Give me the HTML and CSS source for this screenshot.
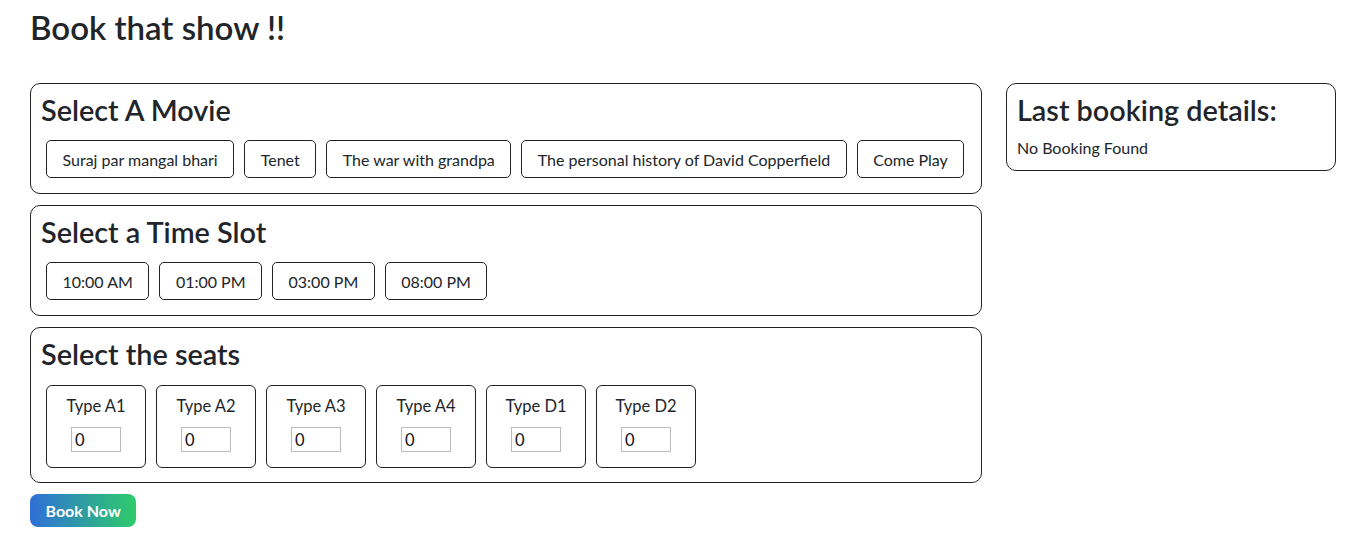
FILE: index.html
```html
<!DOCTYPE html>
<html lang="en">
<head>
<meta charset="utf-8">
<title>Book that show !!</title>
<link rel="stylesheet" href="styles.css">
</head>
<body>
<div class="page">
  <h2 class="title">Book that show !!</h2>
  <div class="layout">
    <div class="left">
      <section class="card">
        <h3 class="card-title">Select A Movie</h3>
        <div class="options">
          <button class="opt">Suraj par mangal bhari</button>
          <button class="opt">Tenet</button>
          <button class="opt">The war with grandpa</button>
          <button class="opt">The personal history of David Copperfield</button>
          <button class="opt">Come Play</button>
        </div>
      </section>
      <section class="card">
        <h3 class="card-title">Select a Time Slot</h3>
        <div class="options">
          <button class="opt">10:00 AM</button>
          <button class="opt">01:00 PM</button>
          <button class="opt">03:00 PM</button>
          <button class="opt">08:00 PM</button>
        </div>
      </section>
      <section class="card">
        <h3 class="card-title">Select the seats</h3>
        <div class="options">
          <div class="seat"><span class="seat-label">Type A1</span><input class="seat-input" type="number" value="0"></div>
          <div class="seat"><span class="seat-label">Type A2</span><input class="seat-input" type="number" value="0"></div>
          <div class="seat"><span class="seat-label">Type A3</span><input class="seat-input" type="number" value="0"></div>
          <div class="seat"><span class="seat-label">Type A4</span><input class="seat-input" type="number" value="0"></div>
          <div class="seat"><span class="seat-label">Type D1</span><input class="seat-input" type="number" value="0"></div>
          <div class="seat"><span class="seat-label">Type D2</span><input class="seat-input" type="number" value="0"></div>
        </div>
      </section>
      <div><button class="book">Book Now</button></div>
    </div>
    <aside class="right">
      <section class="card">
        <h3 class="card-title">Last booking details:</h3>
        <p class="note">No Booking Found</p>
      </section>
    </aside>
  </div>
</div>
</body>
</html>
```
FILE: styles.css
```css
* { box-sizing: border-box; }
body {
  margin: 0;
  font-family: "Lato", "Noto Sans", sans-serif;
  color: #212529;
  font-size: 16.5px;
  line-height: 1.5;
  background: #fff;
}
.page {
  padding: 8px 30px 0;
}
.title {
  margin: 0 0 37px;
  font-size: 33px;
  font-weight: 600;
  line-height: 38px;
}
.layout {
  display: grid;
  grid-template-columns: 1fr 330px;
  gap: 24px;
  align-items: start;
}
.left {
  display: flex;
  flex-direction: column;
  gap: 11px;
}
.card {
  border: 1px solid #222;
  border-radius: 10px;
  padding: 10px;
}
.card-title {
  margin: 0 0 8px;
  font-size: 28.8px;
  font-weight: 600;
  line-height: 33px;
}
.options {
  display: flex;
  flex-wrap: wrap;
}
.opt {
  margin: 5px;
  height: 38px;
  padding: 0 15.5px;
  border: 1px solid #222;
  border-radius: 5px;
  background: #fff;
  color: #212529;
  font-family: inherit;
  font-size: 16px;
  white-space: nowrap;
}
.seat {
  margin: 6px 5px 4px;
  width: 100px;
  height: 83px;
  border: 1px solid #222;
  border-radius: 6px;
  padding-top: 8px;
  display: flex;
  flex-direction: column;
  align-items: center;
}
.seat-label {
  line-height: 24px;
}
.seat-input {
  margin-top: 9px;
  width: 50px;
  height: 25px;
  border: 1px solid #bbb;
  border-radius: 0;
  padding: 0 3px;
  font-family: inherit;
  font-size: 16.5px;
  color: #111;
  -moz-appearance: textfield;
}
.seat-input::-webkit-outer-spin-button,
.seat-input::-webkit-inner-spin-button {
  -webkit-appearance: none;
  margin: 0;
}
.note {
  margin: 0;
  padding-top: 1px;
  font-size: 16px;
  line-height: 24px;
}
.book {
  height: 33px;
  padding: 0 15.5px;
  border: 0;
  border-radius: 8px;
  background: linear-gradient(90deg, #2f6fd8, #2ecc6a);
  color: #fff;
  font-family: inherit;
  font-weight: 700;
  font-size: 16px;
}
```
